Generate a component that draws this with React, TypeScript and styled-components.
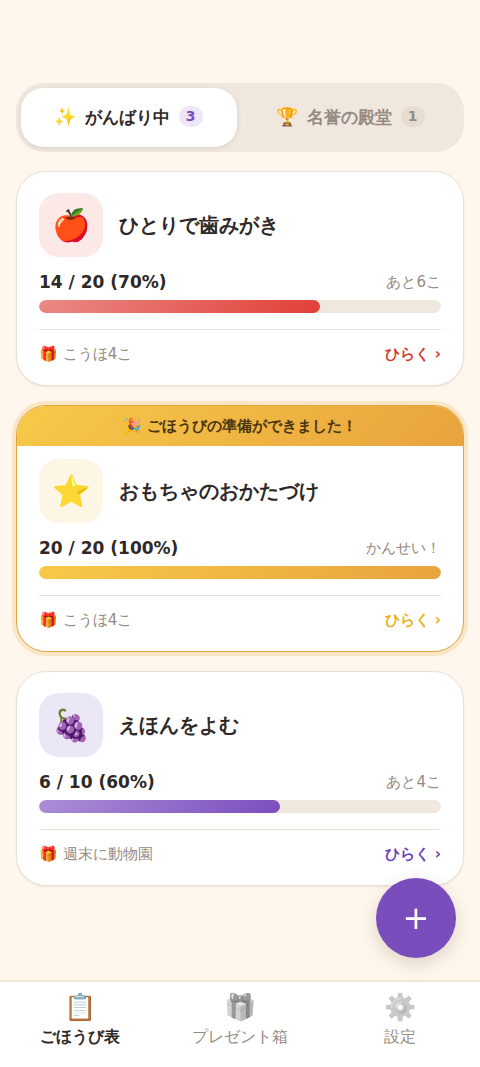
import React, { useState } from 'react';
import styled, { createGlobalStyle } from 'styled-components';

const GlobalStyle = createGlobalStyle`
  *, *::before, *::after { box-sizing: border-box; }
  body {
    margin: 0;
    background: #fff7ed;
    color: #2e2926;
    font-family: "DejaVu Sans", sans-serif;
  }
  button { font-family: inherit; border: 0; cursor: pointer; }
  a { text-decoration: none; }
`;

const Page = styled.div`
  display: flex;
  flex-direction: column;
  min-height: 100vh;
`;

const Main = styled.main`
  flex: 1;
  display: flex;
  flex-direction: column;
  gap: 19px;
  padding: 83px 16px 94px;
`;

const Tabs = styled.div`
  display: grid;
  grid-template-columns: 1fr 1fr;
  gap: 6px;
  padding: 5px;
  border-radius: 28px;
  background: #f0e8df;
`;

const Tab = styled.button<{ $active: boolean }>`
  display: flex;
  align-items: center;
  justify-content: center;
  gap: 9px;
  height: 59px;
  padding: 0 2px 2px 0;
  border-radius: 22px;
  font-size: 17px;
  font-weight: 700;
  line-height: 24px;
  color: ${p => (p.$active ? '#2e2926' : '#968a80')};
  background: ${p => (p.$active ? '#ffffff' : 'transparent')};
  box-shadow: ${p => (p.$active ? '0 1px 4px rgba(90, 70, 50, 0.16)' : 'none')};
`;

const TabIcon = styled.span`
  font-size: 18px;
`;

const Count = styled.span<{ $active: boolean }>`
  min-width: 24px;
  padding: 0 7px;
  border-radius: 11px;
  font-size: 14px;
  line-height: 21px;
  color: ${p => (p.$active ? '#7a4dbd' : '#968a80')};
  background: ${p => (p.$active ? '#ece6f7' : '#e6dcd2')};
`;

const Card = styled.article<{ $ready: boolean }>`
  overflow: hidden;
  border: 1px solid ${p => (p.$ready ? '#dfa640' : '#eae0d6')};
  border-radius: 30px;
  background: #ffffff;
  box-shadow: ${p => (p.$ready ? '0 0 0 4px #fae5c6' : '0 1px 2px rgba(90, 70, 50, 0.1)')};
`;

const Banner = styled.p`
  margin: 0;
  padding: 8px 0;
  text-align: center;
  font-size: 15px;
  font-weight: 700;
  line-height: 24px;
  color: #4b3410;
  background: linear-gradient(135deg, #f7c948, #e8a33d);
`;

const CardBody = styled.div<{ $ready: boolean }>`
  padding: ${p => (p.$ready ? '13px' : '21px')} 22px 21px;
`;

const CardHeader = styled.header`
  display: flex;
  align-items: center;
  gap: 16px;
`;

const Stamp = styled.span<{ $tint: string }>`
  display: flex;
  align-items: center;
  justify-content: center;
  width: 64px;
  height: 64px;
  border-radius: 20px;
  font-size: 31px;
  line-height: 40px;
  background: ${p => p.$tint};
`;

const Title = styled.h2`
  margin: 0;
  font-size: 20px;
  line-height: 26px;
`;

const Row = styled.div`
  display: flex;
  align-items: center;
  justify-content: space-between;
`;

const Stats = styled(Row)`
  margin: 15px 0 8px;
  line-height: 20px;
`;

const Score = styled.strong`
  font-size: 17px;
`;

const Muted = styled.span`
  font-size: 15px;
  color: #968a80;
`;

const Track = styled.div`
  height: 13px;
  border-radius: 7px;
  overflow: hidden;
  background: #f0e8df;
`;

const Fill = styled.div<{ $from: string; $to: string }>`
  height: 100%;
  border-radius: 7px;
  background: linear-gradient(135deg, ${p => p.$from}, ${p => p.$to});
`;

const CardFooter = styled(Row)`
  margin-top: 16px;
  padding-top: 14px;
  border-top: 1px solid #eae0d6;
  line-height: 20px;
`;

const OpenLink = styled.a<{ $color: string }>`
  font-size: 15px;
  font-weight: 600;
  color: ${p => p.$color};
`;

const AddButton = styled.button`
  position: fixed;
  right: 24px;
  bottom: 109px;
  z-index: 2;
  width: 80px;
  height: 80px;
  padding: 0;
  border-radius: 50%;
  font-size: 32px;
  line-height: 40px;
  color: #ffffff;
  background: #7a4dbd;
  box-shadow: 0 6px 18px rgba(90, 70, 50, 0.2);
`;

const BottomNav = styled.nav`
  position: sticky;
  bottom: 0;
  display: grid;
  grid-template-columns: repeat(3, 1fr);
  padding: 7px 0 18px;
  border-top: 2px solid #f0e8d9;
  background: #ffffff;
`;

const NavLink = styled.a<{ $active: boolean }>`
  display: flex;
  flex-direction: column;
  align-items: center;
  font-size: 16px;
  line-height: 24px;
  font-weight: ${p => (p.$active ? 700 : 400)};
  color: ${p => (p.$active ? '#2e2926' : '#968a80')};
`;

const NavIcon = styled.span<{ $active: boolean }>`
  font-size: 26px;
  line-height: 36px;
  font-weight: 400;
  filter: ${p => (p.$active ? 'none' : 'grayscale(1)')};
  opacity: ${p => (p.$active ? 1 : 0.6)};
`;

const charts = [
  { id: 'teeth', icon: '🍎', title: 'ひとりで歯みがき', done: 14, goal: 20, rest: 'あと6こ', gift: 'こうほ4こ', tint: '#fbe8e7', from: '#ea8a86', to: '#e23f37', accent: '#d63c34' },
  { id: 'toys', icon: '⭐', title: 'おもちゃのおかたづけ', done: 20, goal: 20, rest: 'かんせい！', gift: 'こうほ4こ', tint: '#fef6e4', from: '#f7c948', to: '#e8a33d', accent: '#e9b020' },
  { id: 'books', icon: '🍇', title: 'えほんをよむ', done: 6, goal: 10, rest: 'あと4こ', gift: '週末に動物園', tint: '#ece7f7', from: '#ab8fd8', to: '#7a4dbd', accent: '#6e42b5' },
];

const tabs = [
  { icon: '✨', label: 'がんばり中', count: 3 },
  { icon: '🏆', label: '名誉の殿堂', count: 1 },
];

const pages = [
  { icon: '📋', label: 'ごほうび表' },
  { icon: '🎁', label: 'プレゼント箱' },
  { icon: '⚙️', label: '設定' },
];

export default function App() {
  const [tab, setTab] = useState(0);
  return (
    <Page>
      <GlobalStyle />
      <Main>
        <Tabs role="tablist">
          {tabs.map((t, i) => (
            <Tab key={t.label} role="tab" aria-selected={i === tab} $active={i === tab} onClick={() => setTab(i)}>
              <TabIcon>{t.icon}</TabIcon>
              <span>{t.label}</span>
              <Count $active={i === tab}>{t.count}</Count>
            </Tab>
          ))}
        </Tabs>
        {charts.map(c => {
          const percent = Math.round((c.done / c.goal) * 100);
          const ready = percent === 100;
          return (
            <Card key={c.id} $ready={ready}>
              {ready && <Banner>🎉 ごほうびの準備ができました！</Banner>}
              <CardBody $ready={ready}>
                <CardHeader>
                  <Stamp $tint={c.tint}>{c.icon}</Stamp>
                  <Title>{c.title}</Title>
                </CardHeader>
                <Stats>
                  <Score>{`${c.done} / ${c.goal} (${percent}%)`}</Score>
                  <Muted>{c.rest}</Muted>
                </Stats>
                <Track>
                  <Fill $from={c.from} $to={c.to} style={{ width: `${percent}%` }} />
                </Track>
                <CardFooter>
                  <Muted>{`🎁 ${c.gift}`}</Muted>
                  <OpenLink href={`#${c.id}`} $color={c.accent}>ひらく ›</OpenLink>
                </CardFooter>
              </CardBody>
            </Card>
          );
        })}
      </Main>
      <AddButton aria-label="ついか">+</AddButton>
      <BottomNav>
        {pages.map((p, i) => (
          <NavLink key={p.label} href={`#page${i}`} $active={i === 0}>
            <NavIcon $active={i === 0}>{p.icon}</NavIcon>
            {p.label}
          </NavLink>
        ))}
      </BottomNav>
    </Page>
  );
}
